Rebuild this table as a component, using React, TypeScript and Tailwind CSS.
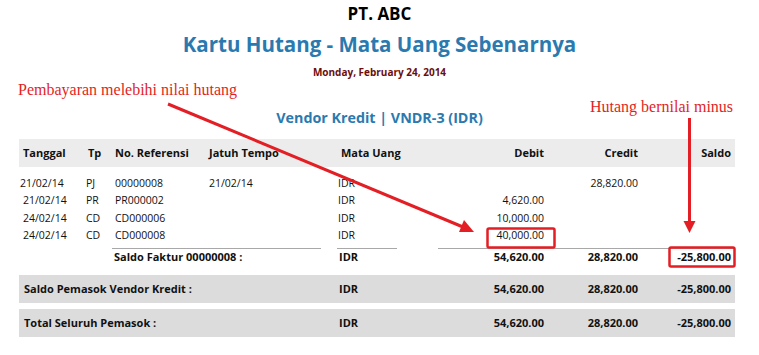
import React from "react";

const cols = "grid grid-cols-[65px_28px_94px_131px_103px_108px_94px_93px]";

const rows = [
  { tgl: "21/02/14", tp: "PJ", ref: "00000008", jt: "21/02/14", mu: "IDR", debit: "", credit: "28,820.00", first: true },
  { tgl: "21/02/14", tp: "PR", ref: "PR000002", jt: "", mu: "IDR", debit: "4,620.00", credit: "" },
  { tgl: "24/02/14", tp: "CD", ref: "CD000006", jt: "", mu: "IDR", debit: "10,000.00", credit: "" },
  { tgl: "24/02/14", tp: "CD", ref: "CD000008", jt: "", mu: "IDR", debit: "40,000.00", credit: "" },
];

const SummaryBand = ({ label }: { label: string }) => (
  <div className={`${cols} h-[28px] items-center bg-[#dcdcdc] font-bold text-[11px] text-[#111]`}>
    <div className="col-span-4 pl-[5px]">{label}</div>
    <div className="pl-[2px]">IDR</div>
    <div className="text-right pr-[4px]">54,620.00</div>
    <div className="text-right pr-[4px]">28,820.00</div>
    <div className="text-right pr-[4px]">-25,800.00</div>
  </div>
);

export default function App() {
  return (
    <div className="relative w-[759px] h-[355px] bg-white overflow-hidden font-['Open_Sans',sans-serif]">
      {/* judul laporan */}
      <div className="flex flex-col items-center">
        <div className="mt-[4px] leading-[20px] text-[17px] font-bold text-black">PT. ABC</div>
        <div className="mt-[5px] leading-[30px] text-[20.5px] font-bold text-[#2a7ab0]">
          Kartu Hutang - Mata Uang Sebenarnya
        </div>
        <div className="mt-[6px] leading-[14px] text-[10px] font-bold text-[#6b0d0d]">Monday, February 24, 2014</div>
        <div className="mt-[29px] leading-[20px] text-[14.3px] font-bold text-[#2a7ab0]">Vendor Kredit | VNDR-3 (IDR)</div>
      </div>

      <div className="ml-[19px] mt-[11px] w-[716px]">
        {/* header kolom */}
        <div className={`${cols} h-[28px] items-center bg-[#ececec] font-bold text-[11px] text-[#111]`}>
          <div className="pl-[4px]">Tanggal</div>
          <div className="pl-[4px]">Tp</div>
          <div className="pl-[3px]">No. Referensi</div>
          <div className="pl-[3px]">Jatuh Tempo</div>
          <div className="pl-[4px]">Mata Uang</div>
          <div className="text-right pr-[4px]">Debit</div>
          <div className="text-right pr-[4px]">Credit</div>
          <div className="text-right pr-[4px]">Saldo</div>
        </div>

        {/* detail transaksi */}
        <div className="mt-[8px] text-[10.5px] text-[#111]">
          {rows.map((r, i) => (
            <div key={i} className={`${cols} h-[17.5px] items-center`}>
              <div className={r.first ? "pl-[1px]" : "pl-[4px]"}>{r.tgl}</div>
              <div className="pl-[2px]">{r.tp}</div>
              <div className="pl-[3px]">{r.ref}</div>
              <div className="pl-[3px]">{r.jt}</div>
              <div className="pl-[1px]">{r.mu}</div>
              <div className="text-right pr-[4px]">{r.debit}</div>
              <div className="text-right pr-[4px]">{r.credit}</div>
              <div></div>
            </div>
          ))}
        </div>

        {/* saldo faktur */}
        <div className={`${cols} mt-[3px] h-[17px] items-center font-bold text-[11px] text-[#111]`}>
          <div className="col-span-2"></div>
          <div className="col-span-2 h-full flex items-center border-t border-[#a8a8a8] mr-[16px] pl-[2px]">
            Saldo Faktur 00000008 :
          </div>
          <div className="h-full flex items-center border-t border-[#a8a8a8] mr-[43px] pl-[2px]">IDR</div>
          <div className="h-full flex items-center justify-end border-t border-[#a8a8a8] pr-[4px] -ml-[2px]">54,620.00</div>
          <div className="h-full flex items-center justify-end border-t border-[#a8a8a8] pr-[4px]">28,820.00</div>
          <div className="h-full flex items-center justify-end border-t border-[#a8a8a8] pr-[4px]">-25,800.00</div>
        </div>

        <div className="mt-[10px] flex flex-col gap-[6px]">
          <SummaryBand label="Saldo Pemasok Vendor Kredit :" />
          <SummaryBand label="Total Seluruh Pemasok :" />
        </div>
      </div>

      {/* anotasi */}
      <div className="absolute left-[18px] top-[80px] font-['Liberation_Serif',serif] text-[16px] leading-[20px] text-[#e31e24]">
        Pembayaran melebihi nilai hutang
      </div>
      <div className="absolute left-[590px] top-[97px] font-['Liberation_Serif',serif] text-[16px] leading-[20px] text-[#e31e24]">
        Hutang bernilai minus
      </div>
      <svg className="absolute left-0 top-0 pointer-events-none" width="759" height="355" viewBox="0 0 759 355">
        <line x1="168" y1="104" x2="463" y2="227" stroke="#e31e24" strokeWidth="3" />
        <polygon points="474,232 459,232 464,220" fill="#e31e24" />
        <line x1="689.5" y1="118" x2="689.5" y2="224" stroke="#e31e24" strokeWidth="3" />
        <polygon points="689.5,233 683.5,221 695.5,221" fill="#e31e24" />
        <rect x="487.5" y="228.5" width="67" height="19" rx="1.5" fill="none" stroke="#e31e24" strokeWidth="2.5" />
        <rect x="669.5" y="247.5" width="65" height="19" rx="1.5" fill="none" stroke="#e31e24" strokeWidth="2.5" />
      </svg>
    </div>
  );
}
